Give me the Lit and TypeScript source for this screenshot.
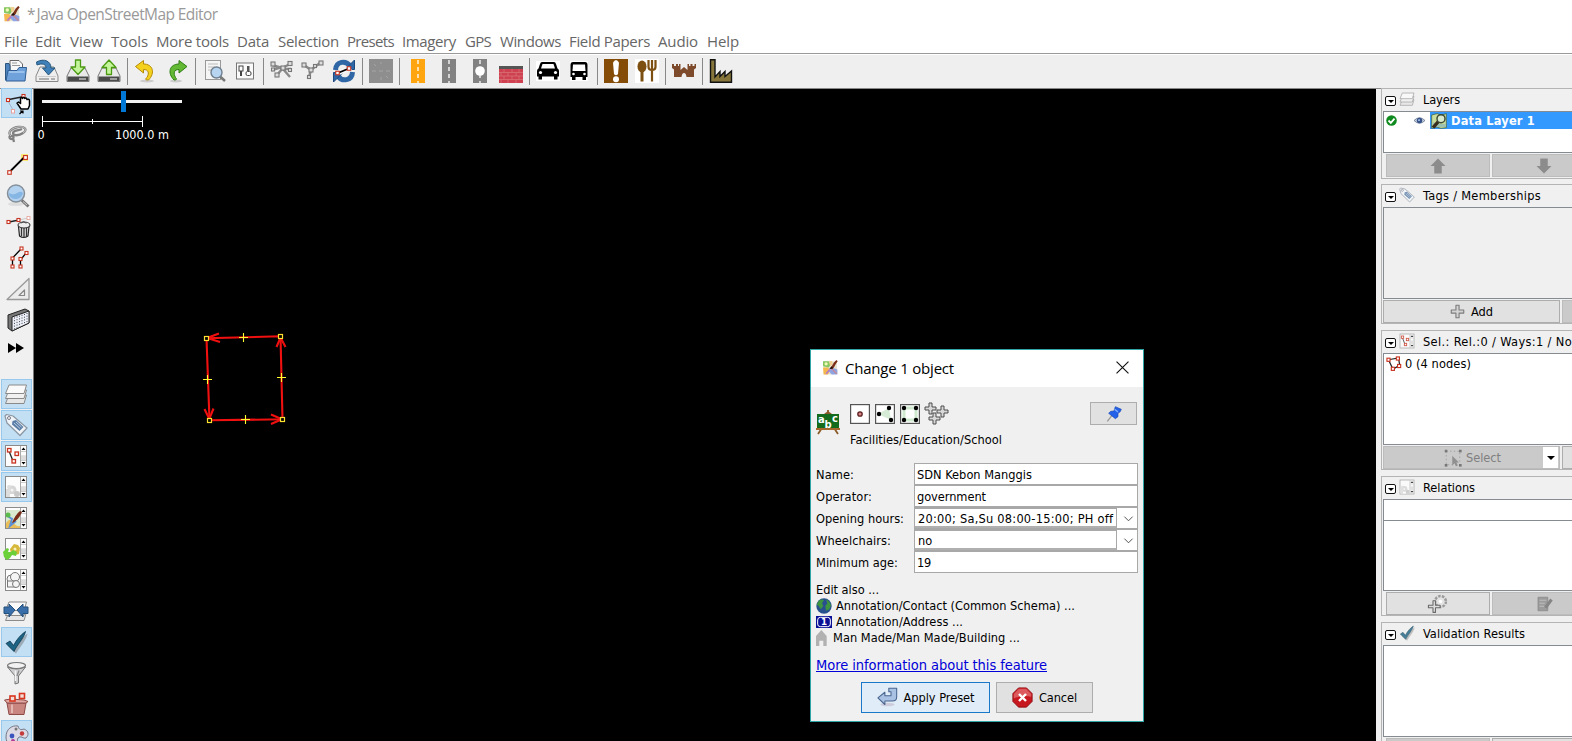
import { LitElement, html, css, svg, nothing } from "lit";
import { customElement, property } from "lit/decorators.js";

const node = (x: number, y: number, s = 3) => svg`<rect x=${x - s / 2} y=${y - s / 2} width=${s} height=${s} fill="#fff" stroke="#c8321e" stroke-width="1.1"/>`;
const gray = (x: number, y: number, s = 3) => svg`<rect x=${x - s / 2} y=${y - s / 2} width=${s} height=${s} fill="#ddd" stroke="#777" stroke-width="1.1"/>`;
const line = (d: string, c = "#000", w = 1) => svg`<path d=${d} stroke=${c} stroke-width=${w} fill="none"/>`;
const fill = (d: string, c: string, s = "none", w = 1) => svg`<path d=${d} fill=${c} stroke=${s} stroke-width=${w} stroke-linejoin="round"/>`;

const drive = svg`${fill("M5 9H19L23 17V22.500H1V17Z", "#e9e9e9", "#777", 1)}${fill("M1.500 17.500H22.500V22H1.500Z", "#4a4a4a")}${line("M13 20H20", "#bbb", 1.500)}`;
const frame = svg`<rect x="1.500" y="1.500" width="21" height="21" fill="#fdfdfd" stroke="#8b8b8b"/><path d="M16.500 2V22" stroke="#aaa"/><path d="M17 7.500H22M17 12H22M17 16.500H22" stroke="#ccc"/><rect x="17" y="12" width="5" height="4" fill="#dcdcdc"/><path d="M17.500 6L19.500 3.500L21.500 6ZM17.500 18L19.500 20.500L21.500 18Z" fill="#000"/>`;
const logo = svg`<path d="M1 2L8 1L15 2L22 4L23 22L14 23L1 23Z" fill="#e6e4cf"/><path d="M0 2H9L12 8L9 12L0 10Z" fill="#86c860"/><path d="M0 12L8 12L11 17L8 23L1 23Z" fill="#f5b84e"/><path d="M14 12L23 15L23 23L14 23L9 18Z" fill="#8fa4e4"/><path d="M10 1L15 2L15 8L11 9Z" fill="#f2d090"/><path d="M12 12L22 22" stroke="#c08a9a" stroke-width="2.500" fill="none"/><path d="M5 22L11 15" stroke="#b77bc8" stroke-width="2.500" fill="none"/><path d="M21.500 0C18.500 2 16 6 14.500 9L11 13.500L14.500 14.500L17.500 12C19 8 22 4 23.500 2Z" fill="#7d3018"/><path d="M10 14.500L14 10L16 13.500Z" fill="#1c1410"/><circle cx="5" cy="6" r="2.600" fill="#f2fab8"/>`;
const tag = svg`${fill("M1 3L2.500 1.500L9 3L23 15L16 22.500L3 10Z", "#f2f5f8", "#8a96a3", 1.200)}${fill("M8.500 8L12 7L19.500 14L15.500 18L8 11.500Z", "#5c7fa8")}${line("M10 10L16 15.500M12 9L17.500 14", "#b9cbe0", 1)}<circle cx="5" cy="5" r="1.500" fill="#fff" stroke="#778"/>`;
const layers = svg`${fill("M5 13H22.500L20 21.500H1.500Z", "#e6e6e6", "#8a8a8a")}${fill("M5 8H22.500L20 16.500H1.500Z", "#f1f1f1", "#8a8a8a")}${fill("M5 3H22.500L20 11.500H1.500Z", "#fafafa", "#8a8a8a")}`;
const check = svg`<path d="M4 16L8 13L11.500 17.500C15 11 18.500 7 23.500 3.500C23 9 16 17 12 23.500Z" fill="#777" opacity=".5"/><path d="M2 13.500L6 11L9.500 15.500C13 9 16.500 5 21.500 1.500C20 8 13 15 10 21.500Z" fill="#1d6384" stroke="#0b3850" stroke-width=".8"/>`;
const cross = (x: number, y: number) => fill(`M${x - 1.500} ${y - 5.500}h3v4h4v3h-4v4h-3v-4h-4v-3h4Z`, "#d8d8d8", "#4c4c4c", 1);

const ICONS: Record<string, unknown> = {
  logo,
  open: svg`${fill("M6 1.500H15L18.500 5V12H6Z", "#f8f8f8", "#666")}${line("M8 4H13M8 6.500H16", "#999")}${fill("M1.500 4.500H5L6 7V21H1.500Z", "#4d84bd", "#2b5580")}${fill("M4 11.500H13L15 8.500H22.500L21 22H2Z", "#6fa2da", "#2f5f95")}${line("M5 13H20.500", "#a8cbf0", 1.500)}`,
  down: svg`${fill("M5 8H19L23 17V22.500H1V17Z", "#eeeeee", "#888")}${line("M3 17.500H21", "#ccc", 1)}${line("M4 20H14M16 20H20", "#999", 1.500)}${fill("M1.500 3C9 -1 16 2 16 9H20L13.500 16L7.500 9H11C11 5 7 4 2 6Z", "#3f80b8", "#24567f")}`,
  dl: svg`${drive}${fill("M9.500 1H14.500V8H19L12 15.500L5 8H9.500Z", "#c4f59a", "#4c9a14", 1.300)}`,
  ul: svg`${drive}${fill("M9.500 15.500H14.500V8.500H19L12 1L5 8.500H9.500Z", "#c4f59a", "#4c9a14", 1.300)}`,
  undo: svg`<ellipse cx="13" cy="22" rx="7" ry="1.500" fill="#ccc"/>${fill("M1.500 7.500L9.500 1.500V5C19 5 21.500 14 14.500 21C11 21 11 20 13 18.500C15.500 14 14.500 10.500 9.500 10.500V14Z", "#f3d11c", "#b58a06")}`,
  redo: svg`<g transform="translate(1 0)"><ellipse cx="10" cy="22" rx="6" ry="1.500" fill="#ccc"/>${fill("M21 7.500L13 1.500V5C3.500 5 1 14 8 21C11 21 11 20 9.500 18.500C7 14 8 10.500 13 10.500V14Z", "#63b934", "#2f7d12")}</g>`,
  search: svg`<rect x="3.500" y="1.500" width="15" height="19" fill="#f5f5f5" stroke="#999"/>${line("M6 5H16M6 8H13M6 11H10", "#bbb", 1.200)}${line("M18 17.500L23 22", "#777", 2.500)}<circle cx="14.500" cy="13.500" r="5.500" fill="#b7d4f0" stroke="#6f7f90" stroke-width="1.400"/>`,
  prefs: svg`<rect x="3.500" y="4" width="17" height="16" fill="#fafafa" stroke="#777"/><rect x="6" y="7" width="4" height="5" fill="#fff" stroke="#444"/><rect x="7" y="12" width="2" height="5" fill="#444"/><rect x="13" y="12.500" width="5" height="4" rx="1.500" fill="#fff" stroke="#444"/><rect x="14" y="7" width="2.500" height="5" fill="#555"/>`,
  split: svg`${line("M2 6L12 9L20 5M2 11L12 8M12 10L7 16M13 10L20 18M14 10L21 10", "#8a8a8a", 2.400)}${gray(3, 5, 4)}${gray(3, 10.5)}${gray(20, 4.5, 4)}${gray(20, 11)}${gray(7, 16, 4)}${gray(13, 9, 4)}`,
  combine: svg`${line("M3 6L10 11L19 4M10 11L8 18", "#8a8a8a", 2.600)}${gray(3, 6, 4)}${gray(20, 4, 4)}${gray(14, 7)}${gray(10, 11, 4)}${gray(8, 18)}`,
  sync: svg`${line("M3.500 11C4 2 14 1 18 7", "#2f66a6", 5)}${fill("M22.500 1V10.500H13Z", "#2f66a6", "#1d4a80")}${line("M20.500 13C20 22 10 23 6 17", "#2f66a6", 5)}${fill("M1.500 23V13.500H11Z", "#2f66a6", "#1d4a80")}<path d="M4 12L17 7.500L20 11L7 16Z" fill="#f4f6fa"/>${line("M6 14L18 9", "#000", 1.800)}${node(5.5, 14, 3.500)}${node(17, 9.5, 3.500)}`,
  blank: svg`<rect width="24" height="24" fill="#8e8e8e"/>${line("M3 12H7M10 12H14M17 12H21M12 3V5M12 18V21M5 5L7 7M17 17L19 19", "#a5a5a5", 1)}`,
  orange: svg`<rect x="5" y="0" width="14" height="24" fill="#ffa50f"/><path d="M12 1V24" stroke="#fff" stroke-width="1.300" stroke-dasharray="4 3"/>`,
  road: svg`<rect x="5" y="0" width="14" height="24" fill="#828282"/><path d="M12 1V24" stroke="#fff" stroke-width="1.300" stroke-dasharray="4 3"/>`,
  round: svg`<rect x="5" y="0" width="14" height="24" fill="#828282"/><path d="M12 1V24" stroke="#fff" stroke-width="1.300" stroke-dasharray="4 3"/><circle cx="12" cy="12" r="4.800" fill="#fff"/>`,
  brick: svg`<rect y="7" width="24" height="17" fill="#cf4050"/><rect y="7" width="24" height="3" fill="#555"/>${line("M0 13.500H24M0 17H24M0 20.500H24M5 10V13.500M13 10V13.500M20 10V13.500M2 13.500V17M9 13.500V17M17 13.500V17M5 17V20.500M13 17V20.500M20 17V20.500M2 20.500V24M9 20.500V24M17 20.500V24", "#d98080", 0.600)}`,
  car: svg`<rect y="2" width="24" height="20" fill="#fff"/><path d="M6 3H18Q19.500 3 20 5L21.500 9.500Q23 10 23 12V17.500H21.500V20.500H18V17.500H6V20.500H2.500V17.500H1V12Q1 10 2.500 9.500L4 5Q4.500 3 6 3Z" fill="#000"/><path d="M6.500 5H17.500L19 9.500H5Z" fill="#fff"/><circle cx="4.500" cy="13.500" r="1.600" fill="#fff"/><circle cx="19.500" cy="13.500" r="1.600" fill="#fff"/>`,
  bus: svg`<rect x="3" y="2" width="18" height="20" fill="#fff"/><path d="M6 3H18Q20.500 3 20.500 6V18H19V21H15.500V18H8.500V21H5V18H3.500V6Q3.500 3 6 3Z" fill="#000"/><path d="M6 5.500H18L18.500 12H5.500Z" fill="#fff"/><circle cx="6.500" cy="15" r="1.300" fill="#fff"/><circle cx="17.500" cy="15" r="1.300" fill="#fff"/>`,
  excl: svg`<rect width="24" height="24" fill="#854c08"/><path d="M9 3.500Q12 -1.500 15 3.500L14 15Q12 17.500 10 15Z" fill="#fff"/><circle cx="12" cy="20.200" r="3" fill="#fff"/>`,
  food: svg`<rect width="24" height="24" fill="#fff"/><ellipse cx="7" cy="7.500" rx="4.500" ry="6" fill="#7d4f10"/>${line("M7 10V22.500", "#7d4f10", 3)}${line("M13.500 1V8Q13.500 11 17 11Q20.500 11 20.500 8V1M17 1V22.500", "#7d4f10", 2.200)}`,
  castle: svg`<path d="M0 5H2V7H4V5H6V7H7V5H8.500V11L12 8L15.500 11V5H17V7H18.500V5H20.500V7H22.500V5H24V9L22 10.500V18H14.500Q14 14 12 14Q10 14 9.500 18H2V10.500L0 9Z" fill="#7e4a2c"/>`,
  factory: svg`<path d="M1.500 .7H6V18L11 12.500V17.500L16 12.500V17.500L22.500 12V23.300H1.500Z" fill="#86763c" stroke="#111" stroke-width="1.400"/>`,
  select: svg`${line("M5 8.500L20 5.500", "#222", 1.300)}${line("M4 10L9 19", "#9cb4cc", 1)}${node(4, 9)}${node(19.5, 5)}<rect x="7.500" y="18.500" width="3" height="3.500" fill="#fff" stroke="#e9a0a0"/>${fill("M16 16.500L13 12L14.500 11L16.500 12.500V7.500Q17.500 5.500 18.500 7.500Q19.500 5 20.700 7.500Q22.200 6 23 8.500Q25.500 7.500 25.500 10V14.500L24 18H17Z", "#fff", "#000", 1.500)}${line("M15.500 23L18.500 20M16 20H19V22.500", "#000", 1.200)}`,
  lasso: svg`<path d="M7 14C3 11 7 6 14 5C21 4 24 8 19 11C15 14 9 14 9 11C9 8 14 9 18 7M7 14C4 15 6 18 9 16.500C11 14 7 13 5 15M9 16L10 20" fill="none" stroke="#808080" stroke-width="2.300"/><path d="M7 14C3 11 7 6 14 5C21 4 24 8 19 11" fill="none" stroke="#ccc" stroke-width=".9"/>`,
  draw: svg`<rect x="17" y="1" width="7" height="7" fill="#f8e878"/>${line("M6 18.500L20 4.500", "#000", 1.800)}${node(5.500, 19.500, 3.500)}${node(21.500, 4.500, 3.800)}`,
  zoom: svg`<ellipse cx="12" cy="20" rx="8" ry="2" fill="#ddd"/>${line("M17.500 16L24.500 22.500", "#777", 3)}${line("M19 17.500L23 21", "#ccc", 1)}<circle cx="12" cy="9.500" r="8.500" fill="#b3d2f0" stroke="#858f9a" stroke-width="1.500"/><path d="M5 9Q9 11.500 13 9T19 9A7.500 7.500 0 0 1 5 11Z" fill="#86b6e4"/>`,
  del: svg`${line("M5 7L15 5", "#222", 1.400)}${line("M15 5L24 3", "#ccc", 1)}${node(4.5, 7)}${node(14.5, 5)}<rect x="23" y="1.500" width="3" height="3" fill="#fff" stroke="#e9b0a8"/>${fill("M14.500 11.500H25L24 21Q19.500 24 15.500 21Z", "#e6e6e6", "#222", 1.200)}${line("M17.500 13V21M20 13V22M22.500 13V21", "#333", 1.300)}<ellipse cx="20" cy="10" rx="6" ry="3" fill="#eee" stroke="#333" stroke-width="1.100"/>${line("M17 8.500Q19.500 5 22 8.500", "#444")}`,
  parallel: svg`${line("M8.500 20V12L17 3M16.500 20V14L22 7", "#000", 1.300)}${node(8.5, 20.500)}${node(8.5, 12.500)}${node(17.5, 2.500)}${node(16.5, 20.500)}${node(16.5, 13)}${node(22.5, 7)}`,
  angle: svg`${fill("M3 22.500L25 1.500V22.500Z", "#ececec", "#999", 1.300)}${fill("M15 18.500L20.500 13V18.500Z", "#f0f0f0", "#888", 1.200)}`,
  extrude: svg`${fill("M4 7L21 1L25 3V15L8 23L4 20Z", "#777", "#222")}${fill("M8 9L25 3V15L8 23Z", "#eceef8", "#222")}<path d="M10.500 9.500V21M13 8.500V20M15.500 7.700V18.800M18 6.800V17.500M20.500 6V16.500M23 5V15.200" stroke="#333" stroke-width=".9" stroke-dasharray="1 1.700"/>`,
  more: svg`<path d="M5 7L13 12L5 17ZM13 7L21 12L13 17Z" fill="#000"/>`,
  layers, tag, check,
  sel: svg`${frame}${line("M5 7L9 17", "#222", 1.300)}<g fill="#fff" stroke="#c8321e" stroke-width="1.300"><rect x="3.500" y="4.500" width="3.500" height="3.500"/><rect x="8" y="15.500" width="3.500" height="3.500"/><rect x="11" y="8" width="3.500" height="3.500"/></g>`,
  rel: svg`${frame}<circle cx="8" cy="15" r="4.500" fill="#d6d6d6"/><circle cx="13" cy="19" r="3" fill="#c8c8c8"/><circle cx="5" cy="12" r="2" fill="#ddd"/><rect x="2" y="14" width="4" height="8" fill="#ddd"/><circle cx="8" cy="15" r="1.500" fill="#f4f4f4"/><rect x="6" y="19" width="4" height="3" fill="#fdfdfd"/>`,
  auth: svg`${frame}<rect x="2" y="4" width="14" height="17" fill="#d9ead0"/><path d="M2 17Q6 11 9 16T16 20V22H2Z" fill="#e9bd58"/><path d="M2 9L8 13L6 20L12 15" stroke="#5c91d8" stroke-width="2" fill="none"/><path d="M16 5Q11 9 8 17Q14 15 18 6Z" fill="#7a2c1a"/><circle cx="4" cy="9" r="2.500" fill="#5dbb4c"/>`,
  hist: svg`${frame}<path d="M6 12L10 7L14 8L16 11L15 17L11 18L7 17Z" fill="#d6b93a"/><circle cx="11" cy="12" r="1.500" fill="#f7efc0"/><path d="M-1 15L3 11L5 12L4 15H7L9 13L13 15L12 19L8 18L6 21L3 23L0 20Z" fill="#6bd03a"/>`,
  sets: svg`${frame}<g fill="#f5f5f5" stroke="#777"><circle cx="7" cy="11" r="4"/><circle cx="11" cy="9" r="4.500"/><rect x="3.500" y="13" width="8" height="6"/><circle cx="12" cy="16" r="3.500"/></g>`,
  minmap: svg`${layers}${fill("M0 8H5V5L11 11L5 18V14.500H0Z", "#3a6ea8", "#24507c")}${fill("M24 8H19V5L13 11L19 18V14.500H24Z", "#3a6ea8", "#24507c")}`,
  filter: svg`<ellipse cx="12.500" cy="4.500" rx="9" ry="3" fill="#f2f2f2" stroke="#777" stroke-width="1.200"/>${fill("M3.500 6Q12.500 10 21.500 6L14.500 15V22L11 23V15Z", "#cfcfd2", "#777")}${line("M11.500 9.500V20", "#f4f4f4", 1.400)}${line("M15 9.500L13 15", "#888", 1.300)}`,
  box: svg`${fill("M3 11H22L20 22.500H5Z", "#c98580", "#8d4b48")}${fill("M3 11L0.500 8L7 7L20 8L24 9.500L22 11Z", "#e3aaa4", "#8d4b48")}${line("M8 12.500V21", "#e3b6b2", 2)}<g fill="#f4dcd8" stroke="#d8361e" stroke-width="1.600"><rect x="6" y="4" width="5" height="5"/><rect x="15.500" y="1.500" width="5" height="5"/></g>`,
  palette: svg`${fill("M2 14C2 6 8 2 14 3C15 7 17 7 20 6C25 8 25 12 22 15C19 16 17 12 14 15C12 18 16 21 12 23C6 24 2 20 2 14Z", "#dcdae4", "#778")}<circle cx="12" cy="6" r="1.500" fill="#777"/><circle cx="8" cy="13" r="2.400" fill="#3b55c0"/><circle cx="18" cy="10.500" r="2.200" fill="#c43a3a"/><circle cx="9" cy="18" r="2" fill="#b03a9a"/>`,
  arrowup: svg`<path d="M12 3L21 12H16.500V21H7.500V12H3Z" fill="#8c8c8c"/>`,
  arrowdown: svg`<path d="M12 21L21 12H16.500V3H7.500V12H3Z" fill="#8c8c8c"/>`,
  ok: svg`<circle cx="12" cy="12" r="11.500" fill="#0f8a1f"/>${line("M5.500 12L10.500 17L18.500 8", "#fff", 4)}`,
  eye: svg`<path d="M0 12Q12 0 24 12Q12 24 0 12Z" fill="#c9d3e4" stroke="#67738c" stroke-width="1.800"/><circle cx="12" cy="12" r="6" fill="#35558a"/><circle cx="11" cy="11" r="2" fill="#c7dcff"/>`,
  osm: svg`<path d="M1 3L9 1L16 3L23 1V22L15 23L8 21L1 23Z" fill="#c9dd9c" stroke="#3f5a2a"/><path d="M3 14Q12 18 22 16V21H3Z" fill="#9bc1b3"/>${line("M11 13L3 22", "#3a2f1c", 5)}<circle cx="15" cy="8.500" r="6" fill="#d9eccf" stroke="#3d4a35" stroke-width="2.200"/>`,
  plus: svg`${fill("M9.500 2H14.500V9.500H22V14.500H14.500V22H9.500V14.500H2V9.500H9.500Z", "#d4d4d4", "#7c7c7c", 1.800)}`,
  way: svg`${line("M4 6L20 3L22 15L11 21Z", "#222", 2)}<g fill="#fff" stroke="#c8321e" stroke-width="1.800"><rect x="1.500" y="3.500" width="5" height="5"/><rect x="16.500" y="1.500" width="5" height="5"/><rect x="18.500" y="13.500" width="5" height="5"/><rect x="8.500" y="18" width="5" height="5"/></g>`,
  seltool: svg`<rect x="3" y="3" width="18" height="18" fill="none" stroke="#999" stroke-dasharray="2 3"/><g fill="#777"><rect x="1" y="1" width="3.500" height="3.500"/><rect x="20" y="1" width="3.500" height="3.500"/><rect x="1" y="20" width="3.500" height="3.500"/><rect x="20" y="20" width="3.500" height="3.500"/></g><path d="M11 9V22L14 19L16 23L18.500 22L16.500 18H20Z" fill="#909090"/>`,
  relnew: svg`<circle cx="15" cy="9" r="6.500" fill="#e3e3e3" stroke="#9a9a9a" stroke-width="3" stroke-dasharray="3 1.500"/><circle cx="15" cy="9" r="2.200" fill="#fff"/>${fill("M6 8H9V13.500H14.500V16.500H9V22H6V16.500H.5V13.500H6Z", "#ddd", "#6a6a6a", 1.300)}`,
  edit: svg`<path d="M4 3H17V21H4Z" fill="#9c9c9c" stroke="#858585"/>${line("M6 7H15M6 11H13M6 15H12", "#bdbdbd", 1.300)}${line("M22 6L14 17", "#858585", 4)}`,
  board: svg`${line("M12 0V4M6 18L2 24M18 18L22 24", "#8c5a28", 1.800)}${fill("M8 4L12 1L16 4Z", "#8c5a28")}<rect x="1" y="4" width="22" height="15" fill="#146b1c"/><rect y="18" width="24" height="2" fill="#a5672c"/><g fill="#fff" font-family="DejaVu Sans" font-weight="bold" font-size="10"><text x="2" y="12.500">a</text><text x="8.500" y="17.500">b</text><text x="16" y="12">c</text></g>`,
  tnode: svg`<rect x="2.600" y="2.600" width="18.800" height="18.800" fill="#fff" stroke="#555" stroke-width="1.200"/><circle cx="12" cy="12" r="2.200" fill="#d88" stroke="#5a2020" stroke-width="1.300"/>`,
  tway: svg`<rect x="2.600" y="2.600" width="18.800" height="18.800" fill="#fff" stroke="#555" stroke-width="1.200"/><path d="M5 12L16 6L18 18Z" fill="#d5ebd5"/><circle cx="6" cy="12" r="2.200"/><circle cx="16" cy="6" r="2.200"/><circle cx="18" cy="18" r="2.200"/>`,
  tarea: svg`<rect x="2.600" y="2.600" width="18.800" height="18.800" fill="#fff" stroke="#555" stroke-width="1.200"/><path d="M6 6H18V18H6Z" fill="#fff" stroke="#cfe9cf" stroke-width="3"/><circle cx="6" cy="6" r="2.200"/><circle cx="18" cy="6" r="2.200"/><circle cx="6" cy="18" r="2.200"/><circle cx="18" cy="18" r="2.200"/>`,
  tmulti: svg`<g transform="translate(.5 0)">${cross(7, 6.5)}${cross(19, 9.5)}${cross(11, 16.500)}</g>`,
  pin: svg`${line("M9 14L2 23", "#999", 2)}${fill("M14 1L23 5L21 9L18 10.500L18 16L14 19L4 11L7 8L12 7.500Z", "#2361e8", "#1a48b8")}${line("M13 5L18 9", "#7fb0ff", 2)}`,
  globe: svg`<circle cx="12" cy="12" r="11.500" fill="#28508f"/><path d="M4 4Q9 1 12 3L9 8L11 12L7 17L4 12L1 10Z" fill="#3f9440"/><path d="M15 2Q21 5 22.500 11L20 17L15 19L14 12L17 8Z" fill="#3f9440"/>`,
  addr: svg`<rect y="3" width="24" height="18" fill="#0a0f96"/><rect x="2.500" y="5" width="19" height="14" rx="4" fill="none" stroke="#fff" stroke-width="1.500"/><text x="12" y="17" text-anchor="middle" font-family="DejaVu Sans" font-weight="bold" font-size="13" fill="#fff">1</text>`,
  house: svg`<path d="M8 0L0 9V24H5V16H11V24H16V9Z" fill="#b1b1b1"/>`,
  apply: svg`<ellipse cx="12" cy="20" rx="8" ry="2" fill="#ccd"/>${fill("M1 12.500L9 6V10H16V5.500H13.500V1.500H22.500V11Q22.500 16 17.500 16H9V20Z", "#a9c1e3", "#49658f", 1.200)}`,
  cancel: svg`<path d="M7.500 1H16.500L23 7.500V16.500L16.500 23H7.500L1 16.500V7.500Z" fill="#c8181f" stroke="#8c0c10"/><path d="M8 2H16L22 8V11Q12 9 2 13V8Z" fill="#dc5a5e"/>${line("M8 8L16 16M16 8L8 16", "#fff", 2.800)}`,
  close: svg`${line("M1 1L23 23M23 1L1 23", "#111", 2.100)}`,
  chev: svg`${line("M3 8L12 17L21 8", "#444", 2)}`,
};

@customElement("ui-icon")
class UiIcon extends LitElement {
  @property() name = "";
  @property({ type: Number }) size = 24;
  static styles = css`:host{display:block;flex:none;line-height:0}svg{display:block;overflow:visible}`;
  render() {
    return html`<svg width=${this.size} height=${this.size} viewBox="0 0 24 24">${ICONS[this.name] ?? nothing}</svg>`;
  }
}

/* One-line label whose tracking is tuned so it occupies exactly w pixels. */
@customElement("ui-label")
class UiLabel extends LitElement {
  @property() text = "";
  @property({ type: Number }) w = 0;
  static styles = css`:host{display:block;flex:none;white-space:pre}span{display:inline-block;text-decoration:inherit}`;
  render() { return html`<span>${this.text}</span>`; }
  updated() {
    const s = this.renderRoot.querySelector("span") as HTMLElement;
    s.style.letterSpacing = "0";
    if (this.w) s.style.letterSpacing = `${(this.w - s.getBoundingClientRect().width) / this.text.length}px`;
  }
}

const MENU: [string, number, number][] = [["File", 4, 24], ["Edit", 35, 26], ["View", 70, 33], ["Tools", 111, 37], ["More tools", 156, 73], ["Data", 237, 32], ["Selection", 278, 61], ["Presets", 347, 47], ["Imagery", 402, 54], ["GPS", 465, 26], ["Windows", 500, 61], ["Field Papers", 569, 81], ["Audio", 658, 40], ["Help", 707, 32]];
const TOOLBAR = [["open", "down", "dl", "ul"], ["undo", "redo"], ["search", "prefs"], ["split", "combine", "sync"], ["blank"], ["orange", "road", "round", "brick"], ["car", "bus"], ["excl", "food"], ["castle"], ["factory"]];
const MODES = ["select", "lasso", "draw", "zoom", "del", "parallel", "angle", "extrude"];
const TOGGLES: [string, boolean][] = [["layers", true], ["tag", true], ["sel", true], ["rel", true], ["auth", false], ["hist", false], ["sets", false], ["minmap", false], ["check", true], ["filter", false], ["box", false], ["palette", true]];

@customElement("app-root")
class AppRoot extends LitElement {
  static styles = css`
    :host { display: flex; flex-direction: column; width: 1572px; height: 741px; overflow: hidden; background: #f0f0f0; color: #000; font: 12.700px/16px "DejaVu Sans Condensed", "DejaVu Sans", sans-serif; }
    * { box-sizing: border-box; }
    .title { height: 30px; background: #fff; display: flex; align-items: center; padding-left: 4px; padding-bottom: 2px; color: #999; font: 15.500px/20px "Open Sans", sans-serif; }
    .title .star { margin: 0 1px 0 7px; }
    .menu { height: 24px; background: #fff; border-bottom: 1px solid #9a9a9a; display: grid; color: #666; font: 15px/23px "Open Sans", sans-serif; }
    .menu ui-label { grid-area: 1/1; margin-left: var(--x); }
    .tools { height: 35px; display: flex; align-items: center; background: #efefef; border-bottom: 1px solid #888; border-top: 1px solid #fff; flex: none; padding-bottom: 1px; }
    .cell { width: 31px; padding-left: 4px; }
    .sep { width: 6px; height: 27px; padding-left: 3px; }
    .sep::before { content: ""; display: block; width: 1px; height: 27px; background: #888; }
    .main { flex: 1; min-height: 0; display: flex; }
    .side { width: 33px; flex: none; display: flex; flex-direction: column; margin-top: -1px; padding-left: 1px; height: 653px; overflow: hidden; }
    .side > div { width: 31px; height: 30px; margin-bottom: 1px; flex: none; display: flex; align-items: center; justify-content: center; padding-right: 2px; }
    .side > .on { background: #c3dff4; border: 1px solid #97c8ee; }
    .side > .more { height: 24px; margin-bottom: 19px; padding-right: 3px; }
    .map { width: 1343px; background: #000; position: relative; border-left: 1px solid #777; flex: none; }
    .map svg.c { display: block; }
    .scale { font-size: 12.500px; fill: #fff; }
    .right { flex: 1; min-width: 0; padding-left: 5px; overflow: hidden; display: flex; flex-direction: column; gap: 6px; margin-top: -1px; }
    .panel { width: 220px; border: 1px solid #b4b4b4; flex: none; display: flex; flex-direction: column; padding: 0 1px; height: 140px; }
    .panel.first { height: 91px; margin-bottom: -1px; }
    .head { height: 22px; flex: none; display: flex; align-items: center; padding-left: 2px; }
    .head ui-icon { margin: 0 8px 2px 3px; opacity: .8; }
    .head ui-label { margin-top: -1px; }
    .col { width: 11px; height: 10px; border: 1px solid #111; border-radius: 2px; background: #fff; display: flex; align-items: center; justify-content: center; margin-top: 2px; flex: none; }
    .col::after { content: ""; border: 3px solid transparent; border-bottom: 0; border-top-color: #000; }
    .box { border: 1px solid #868b92; background: #fff; height: 92px; flex: none; }
    .box.short { height: 42px; }
    .box.field { height: 22px; }
    .box.rest { height: 70px; border-top: 0; }
    .box.empty { background: #f0f0f0; }
    .row { display: flex; align-items: center; height: 17px; }
    .row.item { height: 19px; padding-left: 2px; gap: 4px; }
    .row .ok { margin-left: 2px; }
    .row .eye { margin-left: 17px; }
    .hl { background: #3399ff; color: #fff; font-weight: bold; display: flex; align-items: center; height: 17px; flex: 1; gap: 4px; padding-left: 1px; margin-left: 5px; }
    .btns { display: flex; gap: 2px; padding: 1px 0 0 3px; height: 25px; flex: none; }
    .b { height: 23px; border: 1px solid #adadad; background: #e1e1e1; display: flex; align-items: center; justify-content: center; flex: none; gap: 6px; }
    .b.dis { background: #cacaca; border-color: #bcbcbc; color: #808080; }
    .w1 { width: 104px; }
    .w2 { width: 177px; }
    .btns.flush { padding-left: 0; }
    .dd { width: 15px; height: 21px; background: #fff; margin: 0 1px 0 auto; display: flex; align-items: center; justify-content: center; }
    .dd::after { content: ""; border: 4px solid transparent; border-bottom: 0; border-top-color: #000; }
    .selb { justify-content: flex-start; padding-left: 60px; gap: 4px; }
    .dialog { position: absolute; left: 776px; top: 260px; width: 334px; height: 373px; border: 1px solid #2fa5a5; background: #f0f0f0; display: flex; flex-direction: column; }
    .dt { height: 37px; flex: none; background: #fff; display: flex; align-items: center; padding: 0 14px 2px 12px; gap: 7px; font: 15px/20px "Open Sans", sans-serif; }
    .dt .x { margin-left: auto; }
    .info { display: flex; padding: 15px 6px 0 5px; height: 76px; }
    .info .bd { margin-top: 8px; }
    .mid { margin-left: 10px; flex: 1; }
    .types { display: flex; gap: 1px; margin: 0 0 6px -2px; }
    .pinb { width: 47px; }
    .form { display: grid; grid-template-columns: 98px 224px; grid-auto-rows: 22px; padding-left: 5px; align-items: center; }
    .f { height: 22px; border: 1px solid #a8a8a8; background: #fff; display: flex; align-items: center; padding-left: 2px; }
    .form ui-label { margin-top: 1px; }
    .f.combo { padding-left: 0; }
    .f .in { flex: 1; height: 20px; border-right: 1px solid #a8a8a8; border-bottom: 2px solid #b0b0b0; border-top: 1px solid #a8a8a8; display: flex; align-items: center; padding-left: 3px; }
    .f .in ui-label { margin-top: 2px; }
    .f .ar { width: 20px; display: flex; justify-content: center; padding-left: 2px; }
    .also { padding: 9px 0 0 5px; }
    .also > div { display: flex; gap: 4px; align-items: center; height: 16px; }
    .link { color: #0000d8; font-size: 14.500px; line-height: 18px; padding: 10px 0 0 5px; }
    .link ui-label { text-decoration: underline; }
    .acts { display: flex; gap: 6px; padding: 8px 0 0 50px; }
    .acts .b { height: 31px; gap: 6px; }
    .acts .apply { width: 129px; background: #e0ecf7; border: 1px solid #1a78c8; }
    .cancel { width: 97px; }
  `;

  head(icon: string, text: string, w: number) {
    return html`<div class="head"><div class="col"></div><ui-icon name=${icon} size="16"></ui-icon><ui-label text=${text} w=${w}></ui-label></div>`;
  }

  plus(x: number, y: number) { return svg`<path d="M${x - 4.500} ${y}h9M${x} ${y - 4.500}v9" stroke="#ffff30" stroke-width="1.100"/>`; }
  nd(x: number, y: number) { return svg`<rect x=${x - 2} y=${y - 2} width="4" height="4" fill="#000" stroke="#ffe030" stroke-width="1.200"/>`; }

  canvas() {
    return html`<svg class="c" width="1342" height="652" viewBox="34 89 1342 652">
      <rect x="42" y="100" width="140" height="3" fill="#f2f2f2"/>
      <rect x="121" y="91" width="5" height="21" fill="#0078d7"/>
      <path d="M42.500 121.500H142.500M42.500 116V127M142.500 116V127M92.500 119V124" stroke="#fff"/>
      <g class="scale"><text x="37.500" y="139">0</text><text x="115" y="139" textLength="54">1000.0 m</text></g>
      <g stroke="#f01010" stroke-width="2.100" fill="none">
        <path d="M280.500 336.300L206.500 338.300L209.500 420.300L282.500 419.300Z"/>
        <path d="M219 333.500L207 338L220 342M204.500 409L209.300 419L213.500 408.500M271 414.500L282 419.300L271 424M276.500 347L280.500 337.500L285.500 347"/>
      </g>
      ${this.plus(243.5, 337.500)}${this.plus(281.5, 377.500)}${this.plus(245.5, 419.500)}${this.plus(207.5, 379.500)}
      ${this.nd(206.5, 338.500)}${this.nd(280.5, 336.500)}${this.nd(282.5, 419.500)}${this.nd(209.5, 420.500)}
    </svg>`;
  }

  dialog() {
    const row = (l: string, lw: number, v: string, vw: number, combo = false) => html`<ui-label text=${l} w=${lw}></ui-label>
      ${combo ? html`<div class="f combo"><div class="in"><ui-label text=${v} w=${vw}></ui-label></div><div class="ar"><ui-icon name="chev" size="11"></ui-icon></div></div>`
        : html`<div class="f"><ui-label text=${v} w=${vw}></ui-label></div>`}`;
    return html`<div class="dialog">
      <div class="dt"><ui-icon name="logo" size="15"></ui-icon><ui-label text="Change 1 object" w="109"></ui-label><ui-icon class="x" name="close" size="13"></ui-icon></div>
      <div class="info">
        <ui-icon class="bd" name="board"></ui-icon>
        <div class="mid"><div class="types"><ui-icon name="tnode"></ui-icon><ui-icon name="tway"></ui-icon><ui-icon name="tarea"></ui-icon><ui-icon name="tmulti"></ui-icon></div>
          <ui-label text="Facilities/Education/School" w="152"></ui-label></div>
        <div class="b pinb"><ui-icon name="pin" size="16"></ui-icon></div>
      </div>
      <div class="form">
        ${row("Name:", 38, "SDN Kebon Manggis", 115)}
        ${row("Operator:", 56, "government", 69)}
        ${row("Opening hours:", 88, "20:00; Sa,Su 08:00-15:00; PH off", 195, true)}
        ${row("Wheelchairs:", 75, "no", 14, true)}
        ${row("Minimum age:", 82, "19", 14)}
      </div>
      <div class="also">
        <div><ui-label text="Edit also ..." w="63"></ui-label></div>
        <div><ui-icon name="globe" size="16"></ui-icon><ui-label text="Annotation/Contact (Common Schema) ..." w="239"></ui-label></div>
        <div><ui-icon name="addr" size="16"></ui-icon><ui-label text="Annotation/Address ..." w="127"></ui-label></div>
        <div><svg width="13" height="16" viewBox="0 0 19.5 24"><g>${ICONS.house}</g></svg><ui-label text="Man Made/Man Made/Building ..." w="187"></ui-label></div>
      </div>
      <div class="link"><ui-label text="More information about this feature" w="231"></ui-label></div>
      <div class="acts">
        <div class="b apply"><ui-icon name="apply" size="21"></ui-icon><ui-label text="Apply Preset" w="71"></ui-label></div>
        <div class="b cancel"><ui-icon name="cancel" size="21"></ui-icon><ui-label text="Cancel" w="38"></ui-label></div>
      </div>
    </div>`;
  }

  render() {
    return html`
      <div class="title"><ui-icon name="logo" size="16"></ui-icon><ui-label class="star" text="*"></ui-label><ui-label text="Java OpenStreetMap Editor" w="181"></ui-label></div>
      <div class="menu">${MENU.map(([t, x, w]) => html`<ui-label style="--x:${x}px" text=${t} w=${w}></ui-label>`)}</div>
      <div class="tools">${TOOLBAR.map((g, i) => html`${i ? html`<div class="sep"></div>` : nothing}${g.map(n => html`<div class="cell"><ui-icon name=${n}></ui-icon></div>`)}`)}</div>
      <div class="main">
        <div class="side">
          ${MODES.map((n, i) => html`<div class=${i === 0 ? "on" : ""}><ui-icon name=${n}></ui-icon></div>`)}
          <div class="more"><ui-icon name="more"></ui-icon></div>
          ${TOGGLES.map(([n, on]) => html`<div class=${on ? "on" : ""}><ui-icon name=${n}></ui-icon></div>`)}
        </div>
        <div class="map">${this.canvas()}${this.dialog()}</div>
        <div class="right">
          <div class="panel first">
            ${this.head("layers", "Layers", 37)}
            <div class="box short"><div class="row"><ui-icon class="ok" name="ok" size="11"></ui-icon><ui-icon class="eye" name="eye" size="11"></ui-icon>
              <div class="hl"><ui-icon name="osm" size="16"></ui-icon><ui-label text="Data Layer 1" w="84"></ui-label></div></div></div>
            <div class="btns"><div class="b dis w1"><ui-icon name="arrowup" size="20"></ui-icon></div><div class="b dis w1"><ui-icon name="arrowdown" size="20"></ui-icon></div></div>
          </div>
          <div class="panel">
            ${this.head("tag", "Tags / Memberships", 118)}
            <div class="box empty"></div>
            <div class="btns flush"><div class="b w2"><ui-icon name="plus" size="15"></ui-icon><ui-label text="Add" w="22"></ui-label></div><div class="b dis w1"></div></div>
          </div>
          <div class="panel">
            ${this.head("sel", "Sel.: Rel.:0 / Ways:1 / No", 149)}
            <div class="box"><div class="row item"><ui-icon name="way" size="15"></ui-icon><ui-label text="0 (4 nodes)" w="66"></ui-label></div></div>
            <div class="btns flush"><div class="b dis w2 selb"><ui-icon name="seltool" size="18"></ui-icon><ui-label text="Select" w="35"></ui-label><div class="dd"></div></div><div class="b w1"></div></div>
          </div>
          <div class="panel">
            ${this.head("rel", "Relations", 52)}
            <div class="box field"></div>
            <div class="box rest"></div>
            <div class="btns"><div class="b w1"><ui-icon name="relnew" size="20"></ui-icon></div><div class="b dis w1"><ui-icon name="edit" size="18"></ui-icon></div></div>
          </div>
          <div class="panel">
            ${this.head("check", "Validation Results", 102)}
            <div class="box"></div>
            <div class="btns"><div class="b dis w1"></div><div class="b w1"></div></div>
          </div>
        </div>
      </div>`;
  }
}
